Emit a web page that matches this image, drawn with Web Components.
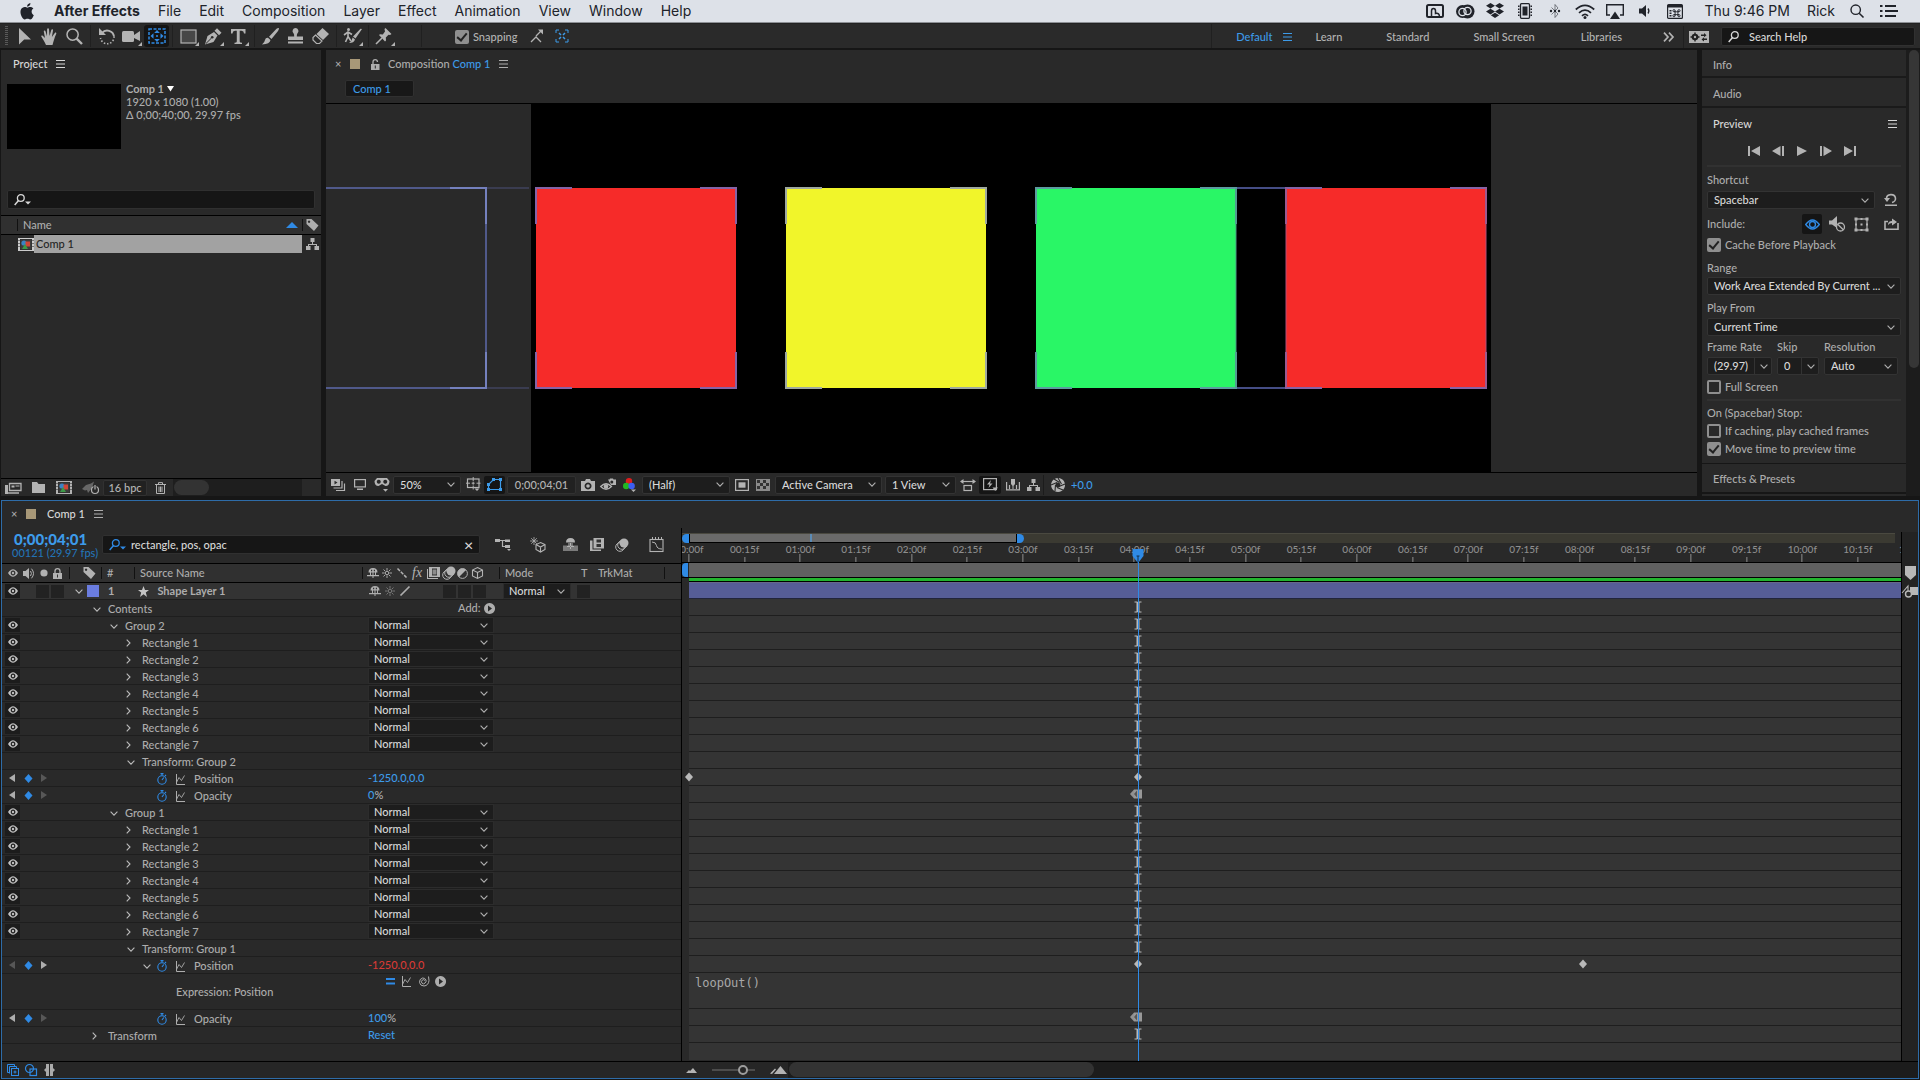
<!DOCTYPE html>
<html lang="en">
<head>
<meta charset="utf-8">
<title>After Effects</title>
<style>
:root{
  --bg:#292929; --dark:#161616; --field:#1d1d1d; --line:#1e1e1e; --text:#adadad; --bright:#d8d8d8; --blue:#3d9be9; --accent:#2f8ae5;
  --ui:Lato,"Open Sans",sans-serif;
}
html,body{height:100%}
body{margin:0;background:var(--dark);color:var(--text);font:500 11px/14px var(--ui);overflow:hidden}
</style>
</head>
<body>
<ae-app></ae-app>
<script>
const BASE = `*{box-sizing:border-box}
button,input,select,textarea{font:inherit;color:inherit;background:none;border:0;padding:0;margin:0;outline:0;border-radius:0}
button{display:flex;align-items:center;justify-content:center;cursor:default}
a{color:inherit;text-decoration:none}`;

function define(tag, css, html) {
  const tpl = document.createElement('template');
  if (typeof html === 'string') tpl.innerHTML = `<style>${BASE}${css}</style>${html}`;
  customElements.define(tag, class extends HTMLElement {
    constructor() { super(); this.attachShadow({mode: 'open'}); }
    connectedCallback() {
      if (this.ready) return;
      this.ready = true;
      if (typeof html === 'function') this.shadowRoot.innerHTML = `<style>${BASE}${css}</style>${html(this)}`;
      else this.shadowRoot.append(tpl.content.cloneNode(true));
    }
  });
}

/* name: [width, height, markup]; shapes use currentColor */
const S = 'fill="none" stroke="currentColor"';
const ICONS = {
  apple: [14,16,'<path d="M9.600 2.600C10.200 1.900 10.500 1 10.400 0 9.500.1 8.600.6 8 1.300 7.400 1.900 7 2.800 7.200 3.700 8.100 3.700 9 3.300 9.600 2.600zM10.400 4C9.100 3.900 8.100 4.700 7.400 4.700 6.800 4.700 5.800 4 4.700 4 3.200 4.100 1.900 4.900 1.200 6.100-.3 8.600.8 12.400 2.200 14.400 2.900 15.400 3.700 16.500 4.800 16.400 5.800 16.400 6.200 15.800 7.500 15.800 8.700 15.800 9.100 16.400 10.200 16.400 11.300 16.400 12 15.400 12.700 14.400 13.500 13.300 13.800 12.200 13.800 12.100 13.800 12.100 11.600 11.300 11.600 8.800 11.600 6.700 13.300 5.700 13.400 5.600 12.400 4.200 10.900 4 10.400 4z"/>'],
  magnet: [18,14,`<rect x="1" y="1" width="16" height="12" rx="1.500" ${S} stroke-width="2"/><path d="M5.500 13V7Q5.500 4.500 7.500 4.500T9.500 7V9.500Q13.500 8.500 13.500 13" ${S} stroke-width="1.500"/>`],
  cc: [20,15,`<circle cx="12.500" cy="7.500" r="7"/><circle cx="7.500" cy="7.500" r="6.500"/><g fill="none" stroke="#dfe3ea" stroke-width="1.300"><circle cx="7.500" cy="8" r="3.600"/><circle cx="12.500" cy="7" r="3.600"/></g>`],
  dropbox: [18,16,'<path d="M4.500 0 9 2.800 4.500 5.600 0 2.800zM13.500 0 18 2.800 13.500 5.600 9 2.800zM4.500 5.800 9 8.600 4.500 11.400 0 8.600zM13.500 5.800 18 8.600 13.500 11.400 9 8.600zM4.800 12.300 9 9.700l4.200 2.600L9 15z"/>'],
  chip: [14,16,`<rect x="2.500" y=".7" width="9" height="14.600" rx="1" ${S} stroke-width="1.300"/><path d="M4.500 3.500h5v9h-5zM0 2.500h1.500v1.500H0zM0 5.500h1.500v1.500H0zM0 8.500h1.500v1.500H0zM0 11.500h1.500V13H0zM12.500 2.500H14v1.500h-1.500zM12.500 5.500H14v1.500h-1.500zM12.500 8.500H14v1.500h-1.500zM12.500 11.500H14V13h-1.500z"/>`],
  bt: [12,16,`<path d="M2.500 4.500 9 11 6 14.500v-13L9 5 2.500 11.500" ${S} stroke-width=".9" opacity=".6"/><circle cx="2" cy="8" r="1.200"/><circle cx="6" cy="8" r="1.200"/><circle cx="10" cy="8" r="1.200"/>`],
  wifi: [20,15,`<g ${S} stroke-width="1.700"><path d="M.8 5.500Q10-2.800 19.200 5.500M4 8.800Q10 3.400 16 8.800M7 11.800Q10 9 13 11.800"/></g><circle cx="10" cy="13.400" r="1.500"/>`],
  airplay: [18,15,`<path d="M4 11H.7V.7h16.600V11H14" ${S} stroke-width="1.400"/><path d="M9 7.500 14 15H4z"/>`],
  vol: [12,14,`<path d="M0 4.500h3L7 1v12L3 9.500H0z"/><path d="M9 4.500Q10.800 7 9 9.500" ${S} stroke-width="1.300"/>`],
  cal: [16,15,`<rect x=".6" y=".6" width="14.800" height="13.800" rx="1" ${S} stroke-width="1.200"/><path d="M1 1h14v2.500H1z"/><path d="M2.500 6h2v1.500h-2zM2.500 8.500h2V10h-2zM2.500 11h2v1.500h-2z"/><g ${S} stroke-width=".9"><circle cx="7" cy="6.700" r="1.100"/><circle cx="12" cy="6.700" r="1.100"/><circle cx="7" cy="11.700" r="1.100"/><circle cx="12" cy="11.700" r="1.100"/><path d="M8.100 6.700v5M10.900 6.700v5M7 7.800h5M7 10.600h5"/></g>`],
  spot: [14,14,`<circle cx="5.700" cy="5.700" r="4.700" ${S} stroke-width="1.400"/><path d="M9.200 9.200 13.500 13.500" ${S} stroke-width="1.600"/>`],
  list: [18,12,'<path d="M0 0h2.500v2H0zM5 0h11v2H5zM0 5h2.500v2H0zM5 5h13v2H5zM0 10h2.500v2H0zM5 10h11v2H5z"/>'],
  grip: [4,20,'<path d="M0 0h3v1H0zM0 2h3v1H0zM0 4h3v1H0zM0 6h3v1H0zM0 8h3v1H0zM0 10h3v1H0zM0 12h3v1H0zM0 14h3v1H0zM0 16h3v1H0zM0 18h3v1H0z" opacity=".35"/>'],
  arrow: [12,17,'<path d="M0 0V16.500L5.200 11.600 12 11.500z"/>'],
  hand: [17,17,`<path d="M5 17C3.500 13.500 1.500 11 .3 8.600 0 7.500 1.200 7 2 7.900L4 10 2.800 3.500C2.700 2.300 4.200 2.100 4.500 3.200L6 8.200 6.100 1.200C6.200 0 7.900 0 8 1.200L8.500 8 10.300 2C10.600.9 12.200 1.200 12 2.400L10.900 9 13.800 5C14.500 4.100 15.800 4.900 15.200 5.900 13.600 9 12.500 13.500 11.500 17z"/>`],
  zoom: [17,17,`<circle cx="6.600" cy="6.600" r="5.600" ${S} stroke-width="1.500"/><path d="M10.600 10.600 16 16" ${S} stroke-width="2.400"/>`],
  rotate: [18,17,`<path d="M4 5A6.800 6.800 0 0 1 16 8.500" ${S} stroke-width="1.900"/><path d="M16 8.500A6.800 6.800 0 0 1 2.500 10" ${S} stroke-width="1.600" stroke-dasharray="1.500 1.700"/><path d="M1 0v7h7z"/>`],
  cam: [20,17,`<rect x="0" y="3" width="12" height="11" rx="1.500"/><path d="M12 7 18 3v10l-6-3z"/>`],
  panb: [18,18,`<rect x="1" y="2" width="16" height="14" ${S} stroke-width="1.500" stroke-dasharray="3 1.500"/><path d="M9 3l2.800 3H6.200zM9 15l2.800-3H6.200zM2.500 9l3-2.800v5.600zM15.500 9l-3-2.800v5.600z"/><circle cx="9" cy="9" r="1"/>`],
  rect: [18,17,`<rect x="1" y="2" width="15" height="13" fill="#474747" stroke="currentColor" stroke-width="1.200"/>`],
  pen: [17,17,`<path d="M0 16.500 2.500 8 9 4 12.500 7.500 8.500 14z"/><path d="M9.500 2.800 12 .3l4.500 4.500-2.500 2.500z"/><path d="M.8 15.700 6.500 10" stroke="#2a2a2a"/><circle cx="7.200" cy="9.300" r="1.300" fill="#2a2a2a"/>`],
  type: [15,15,'<path d="M0 0H14.500V4.500H13Q13 2 10.500 1.800H8.700V12.500Q8.700 13.700 11 13.800V15H3.500V13.800Q5.800 13.700 5.800 12.500V1.800H4Q1.500 2 1.500 4.500H0z"/>'],
  brush: [17,17,'<path d="M16.800 0Q17.500.6 16 3L9.500 11 7 8.800 14.500.8Q16-.4 16.800 0zM6 9.800 8.500 12Q8 16 0 16.500 2.800 14 3 12 3.500 9.500 6 9.800z"/>'],
  stamp: [17,17,'<path d="M8.500 0A3 3 0 0 1 10.500 5.200Q9.700 6 9.800 8.500H16V12H1V8.500H7.200Q7.300 6 6.500 5.200A3 3 0 0 1 8.500 0zM1 13.500H16V15.500H1z"/>'],
  eraser: [18,17,`<path d="M10.500 0 17 6 11 12 4.500 6z"/><path d="M3.500 7 10 13 7.500 15.500H4.500L1 12V9.500z" ${S} stroke-width="1.200"/>`],
  roto: [20,17,`<circle cx="5.500" cy="1.500" r="1.500"/><path d="M5 3.500v5L2.500 14M5 8.500 8 13M1 7 5 4l4 2.500" ${S} stroke-width="1.600"/><path d="M19 1 12.500 10.500 10 8.500 17.500.8zM9.700 9.500 12 11.500Q11 15 6 15 9 13 9.700 9.500z"/>`],
  pin: [17,17,`<path d="M9.500 0 15.500 6 14 7 12.500 6.800 9.800 9.500 10 12.500 9 13.500 3 7 4 6.200 6.800 6.400 9 3.500 8.500 1z"/><path d="M6 10 0 16" ${S} stroke-width="1.600"/>`],
  snap1: [14,14,`<path d="M1 13 6 8l5 5M6 7l5-5" ${S} stroke-width="1.300"/><path d="M8 .5h5v5z"/>`],
  snap2: [14,14,`<path d="M4 1H1v3M10 1h3v3M4 13H1v-3M10 13h3v-3" ${S}/><path d="M4 4l2 2M10 4 8 6M4 10l2-2M10 10 8 8" ${S} stroke-width="1.500"/>`],
  menu: [9,8,'<path d="M0 0h9v1H0zM0 3.500h9v1H0zM0 7h9v1H0z"/>'],
  more: [12,10,`<path d="M1 .7 5 5 1 9.300M6 .7 10 5 6 9.300" ${S} stroke-width="1.700"/>`],
  sync: [20,12,'<rect width="20" height="12"/><g fill="#222"><circle cx="6" cy="6" r="3.300"/><path d="M5.300 1.500h1.400v9H5.300zM1.500 5.300h9v1.400h-9z"/><path d="M12 3.500h3V2l2.500 2.200L15 6.300V5h-3zM18 7.500h-3V6.300L12.500 8.500 15 10.600V9h3z"/></g><circle cx="6" cy="6" r="1.200"/>'],
  mag: [11,12,`<circle cx="6.800" cy="4" r="3.400" ${S} stroke-width="1.300"/><path d="M4.500 6.500.7 11" ${S} stroke-width="1.500"/>`],
  magd: [17,12,`<circle cx="6.800" cy="4" r="3.400" ${S} stroke-width="1.300"/><path d="M4.500 6.500.7 11" ${S} stroke-width="1.500"/><path d="M11 7.500h6L14 10.500z"/>`],
  sort: [12,6,'<path d="M6 0 12 6H0z" fill="#2f8ae5"/>'],
  down: [7,6,'<path d="M0 0h7L3.500 5.500z"/>'],
  tag: [13,12,'<path fill-rule="evenodd" d="M.5 0H5.500L12.500 6.500 8 12 .5 5zM3 1.500a1.200 1.200 0 1 0 .1 0z"/>'],
  compi: [16,13,`<path d="M0 0h2v13H0zM14 0h2v13h-2zM2 0h12v1H2zM2 12h12v1H2z"/><path d="M.5 2h1v1h-1zM.5 5h1v1h-1zM.5 8h1v1h-1zM14.500 2h1v1h-1zM14.500 5h1v1h-1zM14.500 8h1v1h-1z" fill="#222"/><path d="M2.500 1.500h11v10h-11z" fill="#3c3c3c"/><circle cx="6" cy="5" r="2.600" fill="#3a84c4"/><path d="M7.500 3.500H12v5H7.500z" fill="#d04536"/><path d="M7 6l3 5H4z" fill="#3d9a48"/>`],
  flow: [13,12,'<path d="M4.500 0h4v4h-4zM0 8h4.500v4H0zM8.500 8H13v4H8.500z"/><path d="M6 4h1v2h4v2.500h-1V7H3v1.500H2V6h4z"/>'],
  interp: [17,12,`<path d="M4.500 1.500h11.500v7H4.500z" ${S} stroke-width="1.300"/><path d="M6.500 3.500h3v2h-3zM10.500 3.500h4v1h-4zM0 3h3v9H0z"/><path d="M3 11h11" ${S} stroke-width="1.500"/>`],
  folder: [13,11,'<path d="M0 0H5L6.500 2H13V11H0z"/>'],
  rocket: [17,12,`<path d="M0 7 4 3 9 1.500 12-.5 10 6 6 11 5 8 3 8.500z" opacity=".45"/><circle cx="13" cy="8" r="3.500" ${S} stroke-width="1.200"/><path d="M13 3v4.500" stroke="#292929" stroke-width="3"/><path d="M13 3v4.500" ${S} stroke-width="1.200"/>`],
  trash: [11,12,`<path d="M0 2.500h11M3.500 2V.6h4V2M1.500 3v8.500h8V3M4 4.500v5.500M5.500 4.500v5.500M7 4.500v5.500" ${S}/>`],
  unlock: [9,11,`<path d="M2 5V3Q2 .7 4.200.7T6.500 3" ${S} stroke-width="1.300"/><rect y="5" width="8.500" height="6"/><path d="M3.800 6.500h1v3h-1z" fill="#292929"/>`],
  lock: [9,11,`<path d="M2 5V3Q2 .7 4.500.7T7 3v2" ${S} stroke-width="1.300"/><rect y="5" width="9" height="6"/><path d="M4 6.500h1v3H4z" fill="#333"/>`],
  stack: [14,12,`<rect width="9" height="7"/><path d="M11 2v7H2.500M13.500 4.500v7H5" ${S} stroke-width="1.200"/><path d="M3.500 1.800v3.600L6.500 3.600z" fill="#292929"/>`],
  monitor: [12,11,`<rect x=".6" y=".6" width="10.800" height="7.300" ${S} stroke-width="1.200"/><path d="M3 9.500h6V11H3z"/>`],
  goggle: [16,14,`<path fill-rule="evenodd" d="M3 0H13L15.500 3Q15.500 8 11.500 8L8 6 4.500 8Q.5 8 .5 3zM4.700 1.800a2 2 0 1 0 .1 0zM11.200 1.800a2 2 0 1 0 .1 0z"/><path d="M9 11h5l-2.500 2.700z"/>`],
  guides: [15,15,`<rect x="1.500" y="2" width="11.500" height="8.500" ${S} stroke-width="1.200"/><path d="M7.200 0v4M7.200 8.500v4M0 6.200h4M10.500 6.200h4M5.700 6.200h3M7.200 4.700v3" ${S}/><path d="M8.500 11.500h5L11 14z"/>`],
  mask: [15,13,`<path d="M1.500 11.500V6.500L6.500 1.500H13.500V11.500z" ${S} stroke-width="1.200"/><path d="M0 10h3v3H0zM12 10h3v3h-3zM12 0h3v3h-3zM5 0h3v3H5zM0 5h3v3H0z"/>`],
  photo: [14,12,'<path fill-rule="evenodd" d="M0 2H4L5 0H9L10 2H14V12H0zM7 3.500a3.500 3.500 0 1 0 .1 0z"/><circle cx="7" cy="7" r="1.800"/>'],
  showsnap: [16,14,`<path d="M.7 8.500Q6 3 11.500 8.500 6 14 .7 8.500z" ${S} stroke-width="1.300"/><circle cx="6" cy="8.500" r="2.300"/><path d="M8 1.500h1.500L10 .5h3l.5 1H16v5.500h-5z"/><circle cx="11.800" cy="4" r="1.500" fill="#292929"/>`],
  rgb: [14,14,'<circle cx="6" cy="3.200" r="3.200" fill="#e01d1d"/><circle cx="3.200" cy="8" r="3.200" fill="#22b722"/><circle cx="8.600" cy="8" r="3.200" fill="#3c5df0"/><path d="M8 11.500h5L10.500 14z"/>'],
  roi: [14,12,`<rect x=".6" y=".6" width="12.800" height="10.800" ${S} stroke-width="1.200"/><rect x="3.500" y="3.300" width="7" height="5.400"/>`],
  checker: [14,12,`<rect width="14" height="12" fill="#8b8b8b"/><path d="M1 1h3v3H1zM7 1h3v3H7zM4 4h3v3H4zM10 4h3v3h-3zM1 7h3v3H1zM7 7h3v3H7z" fill="#333"/>`],
  aspect: [16,12,`<path d="M1 2.500h14" ${S} stroke-width="1.200"/><path d="M0 2.500 3.500 0v5zM16 2.500 12.500 0v5z"/><rect x="4" y="6.500" width="7.500" height="5" ${S} stroke-width="1.200"/>`],
  fast: [15,13,`<rect x=".6" y=".6" width="12.800" height="11" ${S} stroke-width="1.200"/><path d="M8 2 4 6.500h2.500L5.500 10l4-4.500H7zM9.500 9.500H15L12.200 13z"/>`],
  tlbtn: [14,12,`<path d="M.6 3v7.800h12.800V3M3.500 10V6M10.500 10V6" ${S} stroke-width="1.200"/><path d="M5 0h4v5L7 7.500 5 5zM6.500 6h1v4h-1z"/>`],
  shutter: [14,14,`<path fill-rule="evenodd" d="M7 0a7 7 0 1 0 .1 0zM7 4.500a2.500 2.500 0 1 1-.1 0z"/><path d="M7 0 10.500 6M14 6 8 8.500M12 12 6 9.500M4 13 4.500 7M0 7 6 4.500M3 1 8.500 4.500" stroke="#292929" stroke-width="1.100"/>`],
  first: [12,10,'<path d="M0 0h2v10H0zM12 0v10L3 5z"/>'],
  prev: [12,10,'<path d="M8.500 0v10L0 5zM10 0h2v10h-2z"/>'],
  play: [10,10,'<path d="M0 0v10L10 5z"/>'],
  next: [12,10,'<path d="M0 0h2v10H0zM3.500 0v10L12 5z"/>'],
  last: [12,10,'<path d="M0 0v10L9 5zM10 0h2v10h-2z"/>'],
  reset: [14,12,`<path d="M2.500 4.500A4.500 4 0 1 1 8 8.500" ${S} stroke-width="1.600"/><path d="M0 4h6L3 8zM1 10.500h12V12H1z"/>`],
  eyeb: [15,11,`<path d="M.7 5.500Q7.500-3.500 14.300 5.500 7.500 14.500.7 5.500z" ${S} stroke-width="1.300"/><circle cx="7.500" cy="5.500" r="3" ${S} stroke-width="1.400"/>`],
  mute: [17,16,`<path d="M0 4.500h3L8 0v12L3 8.500H0z"/><circle cx="11.500" cy="11" r="4" fill="#292929" stroke="currentColor" stroke-width="1.300"/><path d="M8.700 8.200 14.300 13.800" ${S} stroke-width="1.300"/>`],
  frame: [15,15,`<rect x="2" y="2" width="11" height="11" ${S} stroke-width="1.200"/><path d="M.5.500h3v3h-3zM11.500.500h3v3h-3zM.5 11.500h3v3h-3zM11.500 11.500h3v3h-3zM6.500 1h2v2h-2zM6.500 12h2v2h-2zM1 6.500h2v2H1zM12 6.500h2v2h-2zM6.500 6.500h2v2h-2z"/>`],
  share: [15,12,`<path d="M4 3.500H1V11.300H14V5" ${S} stroke-width="1.600"/><path d="M4 7Q4 3 8 3V.5L13 4 8 7.500V5Q5.500 5 4 7z"/>`],
  chev: [8,5,`<path d="M.6.700 4 4.200 7.400.700" ${S} stroke-width="1.100"/>`],
  chevr: [5,8,`<path d="M.7.600 4 4 .7 7.400" ${S} stroke-width="1.100"/>`],
  flowmini: [17,13,`<path d="M0 1h5v3H0zM10 1.500h5v2.500h-5zM10 7h5v3h-5z"/><path d="M5 2.500h5M7.500 2.500V8.500H10" ${S} stroke-width="1.200"/><path d="M12 11h4l-2 2z"/>`],
  cubestar: [16,16,`<path d="M10.500 5.500 15 7.500V12.500L10.500 15 6 12.500V7.500zM6 7.500 10.500 10 15 7.500M10.500 10v5" ${S} stroke-width="1.100"/><path d="M4 0v8M0 4h8M1.200 1.200l5.600 5.600M6.800 1.200 1.200 6.800" ${S} stroke-width=".8"/>`],
  shybtn: [16,13,'<path d="M0 7.500h15V13H0z" opacity=".6"/><path fill-rule="evenodd" d="M3 4.500Q3 0 7.500 0T12 4.500zM5.500 5h1v3h-1zM8.500 5h1v3h-1zM7 4h1v7H7zM4 8h7v1H4z"/>'],
  film: [14,13,`<path d="M3.500 0H14V10.500H3.500zM0 2.500h2.500v9H11V13H0z"/><path d="M6.500 1.500h4.500v3H6.500zM6.500 6h4.500v3H6.500z" fill="#333"/>`],
  film2: [13,12,`<path fill-rule="evenodd" d="M2 0H13V10H2zM5 1.500v7h5v-7zM0 2h1v9h10v1H0z"/><path d="M5.500 2.500h4v5h-4z" opacity=".7"/>`],
  blur: [14,14,`<circle cx="5" cy="9" r="4.300" ${S}/><circle cx="7" cy="7" r="4.300" ${S}/><circle cx="9" cy="5" r="4.500"/>`],
  graphed: [16,16,`<rect x="1" y="2.500" width="13" height="12" ${S} stroke-width="1.100"/><path d="M3 5Q7 5 7.500 8.500T13 12M3.500 0v2.500M6.500 0v2.500M9.500 0v2.500M12.500 0v2.500" ${S}/>`],
  eye: [10,8,'<path fill-rule="evenodd" d="M0 4Q5-3.500 10 4 5 11.500 0 4zM5 1.600a2.400 2.400 0 1 0 .1 0z"/><circle cx="5" cy="4" r="1.200"/>'],
  spk: [12,11,`<path d="M0 3h2.500L6 0v11L2.500 8H0z"/><path d="M7.500 3Q9.300 5.500 7.500 8M8.500.700Q12.500 5.500 8.500 10.300" ${S}/>`],
  dot: [8,8,'<circle cx="4" cy="4" r="3.600"/>'],
  shy: [12,10,'<path fill-rule="evenodd" d="M1.500 4.500Q1.500 0 6 0t4.500 4.500zM4 1.800h1.200v1.500H4zM6.800 1.800H8v1.500H6.800z"/><path d="M5.500 4h1v6h-1zM0 7h12v1.200H0zM3 4h1v3.500H3zM8 4h1v3.500H8z"/>'],
  sun: [10,10,`<circle cx="5" cy="5" r="1.800" ${S}/><path d="M5 0v2.500M5 7.500V10M0 5h2.500M7.500 5H10M1.500 1.500 3 3M7 7l1.500 1.500M8.500 1.500 7 3M3 7 1.500 8.500" ${S} stroke-width=".9"/>`],
  dash: [10,10,`<path d="M.5.500 9.500 9.500" ${S} stroke-width="1.500" stroke-dasharray="3.500 1.200"/>`],
  slash: [10,10,`<path d="M.5 9.500 9.500.500" ${S} stroke-width="1.700"/>`],
  adj: [11,11,`<circle cx="5.500" cy="5.500" r="4.900" ${S}/><path d="M9 2 2 9A4.900 4.900 0 0 1 2 2 4.900 4.900 0 0 1 9 2z"/>`],
  cube: [11,12,`<path d="M5.500.6 10.500 3V9L5.500 11.500.5 9V3zM.5 3 5.500 5.500 10.500 3M5.500 5.500v6" ${S} stroke-width="1.100"/>`],
  star: [11,11,'<path d="M5.500 0 7 4H11L7.800 6.600 9 11 5.500 8.300 2 11 3.200 6.600 0 4H4z"/>'],
  playc: [11,11,'<path fill-rule="evenodd" d="M5.500 0a5.500 5.500 0 1 0 .1 0zM4 2.500V8.500L8 5.500z"/>'],
  kprev: [6,8,'<path d="M6 0v8L0 4z"/>'], knext: [6,8,'<path d="M0 0v8L6 4z"/>'],
  kdia: [9,9,'<path d="M4.500 0 8.500 4.500 4.500 9 .5 4.500z"/>'],
  watch: [10,12,`<circle cx="5" cy="7" r="4.200" ${S} stroke-width="1.100"/><path d="M3.500.600h3M5 .600v2M8 2l1 1M5 7l1.800-2.500" ${S} stroke-width="1.200"/>`],
  graph: [9,11,`<path d="M.5 0V10.500H9" ${S}/><path d="M.7 8 3 3.500 5.500 6.500 8.500 1.500" ${S} stroke-width=".9"/>`],
  eq: [9,7,'<path d="M0 0h9v2H0zM0 4.500h9v2H0z"/>'],
  swirl: [12,11,`<path d="M7 4.500A2 2 0 1 0 7 7Q8.500 6 8 4 7 1.800 4.500 2 1.200 3 1.500 6.500 2.200 10 6 10 10.500 9.500 11 4.500L10.500.500" ${S}/>`],
  f1: [12,12,`<rect x="4.500" y="4.500" width="7" height="7" ${S}/><path d="M2.500 8.500H.5V.5H7.500V2.500M2.500 9.500V2.500H9.500V4M6.500 8h3M8 6.500v3" ${S}/>`],
  f2: [12,12,`<circle cx="4.500" cy="4.500" r="4" ${S} stroke-width="1.200"/><rect x="5" y="5" width="6.500" height="6.500" ${S} stroke-width="1.200"/>`],
  f3: [11,12,'<path d="M2 0h3v12H2V8L0 6 2 4zM9 0H6v12h3V8l2-2-2-2z"/>'],
  mt1: [11,5,'<path d="M0 5 3 2 4 3 7 0l4 5z"/>'], mt2: [17,8,`<path d="M4 8 10.500 0 17 8zM0 7.500 5 2.500 6 3.500 2 8z"/>`],
  shield: [11,14,'<path d="M0 0h11v9L5.500 14 0 9z"/>'],
  comps: [16,13,`<path d="M8 2h8v8H8z"/><path d="M0 8 6 1V9" ${S} stroke-width="1.100"/><circle cx="6.500" cy="9" r="3" fill="#292929" stroke="currentColor" stroke-width="1.400"/>`],
  head: [12,14,'<path d="M.5 0h11v7L6 14 .5 7z" fill="#2f8ae5"/><path d="M6 7v6M4.500 7h3" stroke="#10304f"/>'],
  ibeam: [7,11,`<path d="M0 0h3v1H0zM4 0h3v1H4zM2 .5h3v10H2zM0 10h3v1H0zM4 10h3v1H4z"/>`],
  opk: [12,9,'<path d="M4 0v9L0 4.500z" opacity=".7"/><path d="M4 0H12V9H4z" opacity=".75"/><path d="M7 1v7L4 4.500z" fill="#555"/>'],
};
define('ae-icon', ':host{display:block;flex:none}svg{display:block;fill:currentColor;overflow:visible}', el => {
  const [w, h, m] = ICONS[el.getAttribute('name')];
  return `<svg width="${w}" height="${h}" viewBox="0 0 ${w} ${h}" aria-hidden="true">${m}</svg>`;
});
const ic = (n, c) => `<ae-icon name="${n}"${c ? ` class="${c}"` : ''}></ae-icon>`;

define('ae-select', `
:host{display:grid;height:18px;color:var(--bright)}
select{grid-area:1/1;appearance:none;width:100%;min-width:0;background:var(--field);border:1px solid #333;border-radius:2px;padding:0 14px 0 6px;line-height:14px;text-overflow:ellipsis}
ae-icon{grid-area:1/1;justify-self:end;align-self:center;margin-right:6px;pointer-events:none;color:#b0b0b0}
:host([split]) ae-icon{border-left:1px solid #333;padding:6px 0 5px 5px;margin-right:4px}
:host([split]) select{padding-right:0}
:host([slim]){height:16px}
:host([slim]) select{border-radius:0;border-color:#2c2c2c;padding-left:5px}
`, el => `<select aria-label="${el.getAttribute('label')}"><option>${el.textContent}</option></select>${ic('chev')}`);

define('ae-check', `
:host{display:flex}
label{display:flex;align-items:center;gap:4px}
input{appearance:none;width:14px;height:14px;border:2px solid #8f8f8f;border-radius:2px;display:grid;place-items:center}
input:checked{background:#8f8f8f}
input:checked::before{content:"";width:4px;height:8px;border:solid #222;border-width:0 2px 2px 0;transform:rotate(40deg);margin-top:-2px}
`, el => `<label><input type="checkbox"${el.hasAttribute('checked') ? ' checked' : ''}><slot></slot></label>`);

define('ae-search', `
:host{display:flex;flex:none;align-items:center;background:#161616;border:1px solid #303030;border-radius:2px;height:19px;padding-left:6px;gap:5px;color:var(--bright)}
:host([hint]){gap:10px}
input{flex:1;min-width:0;width:0;height:100%}input::placeholder{color:var(--bright);opacity:1}
:host([blue]) .m{color:var(--accent)}
button{width:16px;height:100%;font-size:16px;line-height:14px;margin-right:-1px;justify-content:start}
`, el => `${ic(el.getAttribute('icon'), 'm')}<input type="text" aria-label="${el.getAttribute('label')}" placeholder="${el.getAttribute('hint') || ''}" value="${el.getAttribute('value') || ''}">${el.hasAttribute('value') ? '<button aria-label="Clear">×</button>' : ''}`);

define('mac-menubar', `
:host{display:flex;align-items:center;height:23px;background:#dde1e8;border-bottom:1px solid #8d9095;color:#20232a;font:400 14px/18px Inter,Roboto,sans-serif;padding:0 22px 0 20px}
nav{display:flex;gap:18px;align-items:center}
nav b{font-weight:700;margin-left:2px}
.r{margin-left:auto;display:flex;align-items:center}
.c{display:flex;justify-content:center;width:30px}
.t{margin:0 17px 0 14px}.u{margin-right:15px}
`, `<nav>${ic('apple')}<b>After Effects</b>${['File','Edit','Composition','Layer','Effect','Animation','View','Window','Help'].map(t => `<a href="#">${t}</a>`).join('')}</nav>
<div class="r">${['magnet','cc','dropbox','chip','bt','wifi','airplay','vol','cal'].map(n => `<span class="c">${ic(n)}</span>`).join('')}
<span class="t">Thu 9:46 PM</span><span class="u">Rick</span>${ic('spot')}<span class="c" style="width:34px;justify-content:end">${ic('list')}</span></div>`);

define('ae-toolbar', `
:host{display:flex;align-items:center;height:25px;background:#2a2a2a;border-top:1px solid #222;color:#b3b3b3}
.g{width:12px;padding-left:5px;overflow:hidden}
button{width:25px;height:22px;border-radius:3px;position:relative}
.on{color:var(--accent);background:#151515}
.f::after{content:"";position:absolute;right:2px;bottom:1px;border:2px solid;border-color:transparent currentColor currentColor transparent}
i{width:7px;height:22px;border-left:1px solid #202020;margin-left:3px;margin-right:-3px}
.e{width:34px;margin:0 0 0 24px}
ae-check{margin-right:7px;padding-top:2px}.s{width:25px;height:auto}
.blue{color:var(--blue)}
nav{margin-left:auto;display:flex;align-items:center;height:24px;border-left:1px solid #202020;padding:1px 0 0 24px}
nav a{margin-right:44px}nav .d{margin-right:10px}nav .m{margin-right:24px}
nav .w{margin-right:46px}nav .l{margin-right:37px}
nav .x{width:19px;margin-right:5px}
nav .y{border-left:1px solid #202020;padding:0 12px 0 5px;width:auto;border-radius:0}
ae-search{width:194px;margin-right:5px}
`, `<span class="g">${ic('grip')}</span>
<button aria-label="Selection">${ic('arrow')}</button><button aria-label="Hand">${ic('hand')}</button><button aria-label="Zoom">${ic('zoom')}</button><i></i>
<button aria-label="Rotation">${ic('rotate')}</button><button class="f" aria-label="Camera">${ic('cam')}</button><button class="on" aria-label="Pan behind">${ic('panb')}</button><i></i>
<button class="f" aria-label="Rectangle">${ic('rect')}</button><button class="f" aria-label="Pen">${ic('pen')}</button><button class="f" aria-label="Type">${ic('type')}</button><i></i>
<button aria-label="Brush">${ic('brush')}</button><button aria-label="Clone stamp">${ic('stamp')}</button><button aria-label="Eraser">${ic('eraser')}</button><i></i>
<button class="f" aria-label="Roto brush">${ic('roto')}</button><i></i><button class="f" aria-label="Puppet pin">${ic('pin')}</button><i class="e"></i>
<ae-check checked>Snapping</ae-check><button class="s" aria-label="Snap edges">${ic('snap1')}</button><button class="s blue" aria-label="Snap features">${ic('snap2')}</button>
<nav><a class="blue d" href="#">Default</a><span class="blue m">${ic('menu')}</span><a href="#">Learn</a><a href="#">Standard</a><a class="w" href="#">Small Screen</a><a class="l" href="#">Libraries</a><button class="x" aria-label="More">${ic('more')}</button><button class="y" aria-label="Sync">${ic('sync')}</button><ae-search icon="mag" label="Search Help" hint="Search Help"></ae-search></nav>`);

define('project-panel', `
:host{display:flex;flex-direction:column;background:var(--bg)}
h2{font:inherit;margin:0;display:flex;align-items:center;gap:9px;height:28px;padding-left:12px;color:var(--bright)}
.info{display:flex;gap:5px;padding:6px 0 0 6px;height:112px;line-height:13px}
.th{width:114px;height:65px;background:#000}
.tx{margin-top:-2px}p{margin:0}
.n{font-weight:700;display:flex;align-items:center;gap:3px}.n ae-icon{color:#fff}
ae-search{margin:0 6px 6px 6px}
table{border-collapse:collapse;width:100%;table-layout:fixed;border-top:1px solid #000}
th,td{padding:0;font-weight:inherit;text-align:left;height:18px}
th+th,td+td{padding-left:3px}
thead{background:#303030;border-bottom:1px solid #000}
.k{display:flex;align-items:center;height:18px}
.bar{border-left:1px solid #111;height:12px;margin-right:5px}
.sel{background:#a2a2a2;color:#262626;padding-left:2px;flex:1;height:18px;line-height:18px}
td .k{color:#ccc}
.fill{flex:1}
footer{display:grid;grid-template-columns:25px 25px 26px 26px 44px 26px 129px 1fr;height:18px;border-top:1px solid #000;align-items:center;justify-items:center;color:#b3b3b3}
.b{width:44px;height:16px;background:#212121;border:1px solid #313131;border-radius:2px}
.tr{background:#1e1e1e;width:100%;height:17px;display:flex}.tr span{width:35px;height:15px;margin:1px;border-radius:8px;background:#333}
`, `<h2>Project ${ic('menu')}</h2>
<div class="info"><div class="th"></div><div class="tx"><p class="n">Comp 1${ic('down')}</p><p>1920 x 1080 (1.00)</p><p>Δ 0;00;40;00, 29.97 fps</p></div></div>
<ae-search icon="magd" label="Search project"></ae-search>
<table><colgroup><col><col style="width:18px"></colgroup><thead><tr><th><span class="k" style="padding-left:16px"><span class="bar"></span>Name<span style="margin:0 4px 0 auto">${ic('sort')}</span><span class="bar" style="margin:0"></span></span></th><th>${ic('tag')}</th></tr></thead>
<tbody><tr><td><span class="k" style="padding-left:17px">${ic('compi')}<span class="sel" style="margin-right:1px">Comp 1</span></span></td><td style="color:#b3b3b3">${ic('flow')}</td></tr></tbody></table>
<div class="fill"></div>
<footer>${['interp','folder','compi','rocket'].map(n => `<button aria-label="${n}">${ic(n)}</button>`).join('')}<button class="b">16 bpc</button><button aria-label="Delete">${ic('trash')}</button><span class="tr"><span></span></span></footer>`);

define('ae-viewer', ':host{display:block;background:var(--bg);min-height:0;overflow:hidden}svg{display:block;width:100%;height:100%}', () => {
  const sq = (x, c) => `<rect x="${x}" y="84" width="200" height="200" fill="${c}"/>`;
  const corners = (x, c) => `<path d="M${x} 120V84h36M${x+164} 84h36v36M${x+200} 248v36h-36M${x+36} 284H${x}v-36" fill="none" stroke="${c}" stroke-width="2"/>`;
  return `<svg viewBox="0 0 1371 368" preserveAspectRatio="xMidYMid slice" role="img" aria-label="Composition view"><rect x="205" width="960" height="368"/>
${sq(210,'#f62b29')}${sq(460,'#f1f52a')}${sq(710,'#29f666')}${sq(960,'#f62b29')}
<g stroke="#3a3c50" stroke-width="2"><path d="M160 84h43M160 284h43"/></g>
<g stroke="#50598a" stroke-width="2" fill="none"><path d="M0 84H160V284H0"/></g>
<g stroke="#454d85"><path d="M876 84h84M876 284h84" stroke-width="2"/></g>
<path d="M124 84h36v36M160 248v36h-36" fill="none" stroke="#7480bd" stroke-width="2"/>
${corners(210,'#8563a6')}${corners(460,'#9fa9a0')}${corners(710,'#5c9ca0')}${corners(960,'#8563a6')}
<path d="M910 84V284" stroke="#4b9b86"/><path d="M960 84V284M1160 84V284" stroke="#b0517a"/></svg>`;
});

define('comp-panel', `
:host{display:flex;flex-direction:column;background:var(--bg)}
.tab{display:flex;align-items:center;height:28px;padding-left:9px}
.x{width:15px;height:14px;justify-content:start}.sw{width:10px;height:10px;background:#a89878;margin-right:11px}
.t{margin:0 9px 0 8px}.t a,.c{color:var(--blue)}
.c{margin:2px 0 6px 19px;width:69px;height:17px;background:#181818;border:1px solid #303030;border-radius:2px;justify-content:start;padding-left:7px}
ae-viewer{flex:1;border-top:1px solid #000;border-bottom:1px solid #000}
footer{display:grid;grid-template-columns:23px 22px 21px 71px 20px 23px 72px 19px 22px 22px 91px 20px 22px 110px 74px 20px 24px 21px 20px 5px 20px 60px;height:23px;align-items:center;color:#b3b3b3}
footer ae-select{margin:0 2px 0 1px}
.on{background:#151515;height:18px;border-radius:2px;margin:0 1px}
.b{color:var(--blue)}.tc{height:18px;background:#212121;border:1px solid #313131;border-radius:2px;margin:0 2px 0 1px}
.s{border-left:1px solid #1c1c1c;height:20px}
`, `<div class="tab"><button class="x" aria-label="Close">×</button><span class="sw"></span>${ic('unlock')}<span class="t">Composition <a href="#">Comp 1</a></span>${ic('menu')}</div>
<button class="c">Comp 1</button><ae-viewer></ae-viewer>
<footer>${['stack','monitor','goggle'].map(n => `<button aria-label="${n}">${ic(n)}</button>`).join('')}<ae-select label="Magnification">50%</ae-select><button aria-label="Guides">${ic('guides')}</button><button class="on b" aria-label="Mask visibility">${ic('mask')}</button><button class="tc">0;00;04;01</button>${['photo','showsnap','rgb'].map(n => `<button aria-label="${n}">${ic(n)}</button>`).join('')}<ae-select label="Resolution">(Half)</ae-select><button aria-label="Region">${ic('roi')}</button><button aria-label="Transparency">${ic('checker')}</button><ae-select label="3D view">Active Camera</ae-select><ae-select label="View layout">1 View</ae-select><button aria-label="Pixel aspect">${ic('aspect')}</button><button class="on" aria-label="Fast previews">${ic('fast')}</button><button aria-label="Timeline">${ic('tlbtn')}</button><button aria-label="Flowchart">${ic('flow')}</button><span class="s"></span><button aria-label="Reset exposure">${ic('shutter')}</button><button class="b" style="justify-content:start;padding-left:3px">+0.0</button></footer>`);

define('preview-panel', `
:host{display:flex;background:#1c1c1c;gap:2px}
.m{flex:1;background:var(--bg);display:flex;flex-direction:column}
h2{font:inherit;margin:0;height:30px;padding:3px 9px 0 11px;display:flex;align-items:center;justify-content:space-between;border-bottom:2px solid #1a1a1a;flex:none}
h2.t{height:28px}h2.p{border:0;color:var(--bright);height:32px;padding-top:0}
.body{padding:0 5px;display:flex;flex-direction:column}
.tr{display:flex;justify-content:center;height:27px;border-bottom:2px solid #313131;padding:0 4px 4px 0;color:#b3b3b3}
.tr button{width:24px}
.l{height:23px;display:flex;align-items:center;padding-top:3px}
.l.r1{height:25px;padding-top:6px}
.r{display:flex;align-items:center;color:#b3b3b3}
.r .g{flex:1}
.ib{width:20px;height:20px}.on{background:#151515;color:var(--accent);border-radius:2px}
.three{display:grid;grid-template-columns:65px 42px 74px;column-gap:5px}
hr{border:0;border-top:2px solid #313131;margin:0;width:100%}
.e{border-top:1px solid #161616;border-bottom:2px solid #161616;height:31px;padding:2px 11px 0;margin-top:7px;display:flex;align-items:center}
.sb{width:12px;padding:0 1px}.sb div{height:318px;background:#363636;border-radius:5px}
`, `<div class="m"><h2 class="t">Info</h2><h2>Audio</h2><h2 class="p">Preview ${ic('menu')}</h2>
<div class="body"><div class="tr">${['first','prev','play','next','last'].map(n => `<button aria-label="${n}">${ic(n)}</button>`).join('')}</div>
<div class="l">Shortcut</div>
<div class="r"><ae-select class="g" label="Shortcut">Spacebar</ae-select><button class="ib" style="margin-left:6px" aria-label="Reset">${ic('reset')}</button></div>
<div class="r" style="height:28px"><span class="g" style="color:var(--text)">Include:</span><button class="ib on" aria-label="Video">${ic('eyeb')}</button><button class="ib" style="margin:0 4px 0 5px" aria-label="Audio">${ic('mute')}</button><button class="ib" aria-label="Overlays">${ic('frame')}</button><button class="ib" style="margin-left:10px" aria-label="Loop">${ic('share')}</button></div>
<ae-check checked>Cache Before Playback</ae-check>
<div class="l r1">Range</div><ae-select label="Range">Work Area Extended By Current ...</ae-select>
<div class="l">Play From</div><ae-select label="Play From">Current Time</ae-select>
<div class="three l" style="padding:0;height:21px"><span>Frame Rate</span><span>Skip</span><span>Resolution</span></div>
<div class="three"><ae-select split label="Frame Rate">(29.97)</ae-select><ae-select split label="Skip">0</ae-select><ae-select label="Resolution">Auto</ae-select></div>
<ae-check style="margin:5px 0">Full Screen</ae-check><hr>
<div class="l" style="padding:0">On (Spacebar) Stop:</div>
<ae-check style="margin-bottom:4px">If caching, play cached frames</ae-check><ae-check checked>Move time to preview time</ae-check></div>
<div class="e">Effects &amp; Presets</div></div>
<div class="sb"><div></div></div>`);

/* ---------- timeline data: cx = chevron offset in the tree, tx = gap from chevron to name ---------- */
const rects = [1,2,3,4,5,6,7].map(n => ({t:'shape', cx:54, tx:10, open:0, name:`Rectangle ${n}`, mode:1, mark:'i'}));
const LAYERS = [
  {t:'layer', mark:''},
  {t:'head', cx:23, tx:7, name:'Contents', add:1, mark:'i'},
  {t:'shape', cx:40, tx:7, open:1, name:'Group 2', mode:1, mark:'i'}, ...rects,
  {t:'head', cx:57, tx:7, name:'Transform: Group 2', mark:'i'},
  {t:'prop', name:'Position', value:'-1250.0,0.0', prev:1, mark:'k', keys:[0,121]},
  {t:'prop', name:'Opacity', value:'0', unit:'%', prev:1, mark:'o'},
  {t:'shape', cx:40, tx:7, open:1, name:'Group 1', mode:1, mark:'i'}, ...rects,
  {t:'head', cx:57, tx:7, name:'Transform: Group 1', mark:'i'},
  {t:'prop', name:'Position', value:'-1250.0,0.0', next:1, open:1, red:1, mark:'k', keys:[121,241]},
  {t:'expr', mark:'e'},
  {t:'prop', name:'Opacity', value:'100', unit:'%', prev:1, mark:'o'},
  {t:'head', cx:20, tx:10, open:0, name:'Transform', reset:1, mark:'i'},
];

define('layer-row', `
:host{display:block}
.row{display:flex;height:17px;border-bottom:1px solid var(--line);align-items:center}
.layer{background:#333}.expr{height:36px}
.av{width:68px;flex:none;display:flex;align-items:center;height:16px}
.av button{width:15px;height:14px}
.eye{margin-left:3px;background:#1c1c1c;color:#c0c0c0}
.tree{width:298px;flex:none;display:flex;align-items:center;padding-top:2px}
.c{width:8px;display:flex;justify-content:center;flex:none;color:#bbb}
.bx{width:13px;height:13px;background:#222;margin-right:2px}
.av .bx{margin:0 1px}
.w{width:126px}
.kn{display:flex;align-items:center}.kn button{width:16px}.dim{opacity:.35}
.bl{color:var(--accent)}.v{color:var(--blue);font-weight:500}.red{color:#d63a35}
.sw{display:flex;align-items:center;width:135px}.sw button{width:13px;margin-right:2px}
b{font-weight:700}
.ex{display:flex;align-items:start;align-self:start;padding:2px 0 0 18px}
`, el => {
  const r = LAYERS[el.getAttribute('i')];
  const eye = `<button class="eye" aria-label="Visibility">${ic('eye')}</button>`;
  if (r.t === 'layer') return `<div class="row layer"><span class="av">${eye}<span class="bx" style="margin-left:16px"></span><span class="bx"></span></span>
<span class="tree" style="padding:0"><span class="c" style="margin:0 4px 0 5px">${ic('chev')}</span><span style="width:12px;height:12px;background:#6b7de0;margin-right:9px"></span><b>1</b><span style="margin:0 8px 0 24px;color:#c4c4c4">${ic('star')}</span><b>Shape Layer 1</b></span>
<span class="sw"><button aria-label="Shy">${ic('shy')}</button><button aria-label="Collapse" style="opacity:.6">${ic('sun')}</button><button aria-label="Quality">${ic('slash')}</button><span class="bx" style="margin-left:30px"></span><span class="bx"></span><span class="bx"></span></span>
<ae-select slim label="Mode" style="width:68px;margin-right:6px">Normal</ae-select><span class="bx"></span></div>`;
  if (r.t === 'prop') return `<div class="row"><span class="av kn" style="padding-left:2px"><button class="${r.prev?'':'dim'}" aria-label="Previous keyframe">${ic('kprev')}</button><button class="bl" aria-label="Keyframe">${ic('kdia')}</button><button class="${r.next?'':'dim'}" aria-label="Next keyframe">${ic('knext')}</button></span>
<span class="tree"><span class="c" style="margin:0 6px 0 73px">${r.open ? ic('chev') : ''}</span><span class="bl">${ic('watch')}</span><span style="margin:0 9px 0 9px">${ic('graph')}</span>${r.name}</span><button class="v ${r.red?'red':''}">${r.value}</button>${r.unit||''}</div>`;
  if (r.t === 'expr') return `<div class="row expr"><span style="width:366px;padding-left:174px">Expression: Position</span><span class="ex"><span class="bl" style="margin:2px 7px 0 0">${ic('eq')}</span>${ic('graph')}<span style="margin:0 5px 0 7px">${ic('swirl')}</span>${ic('playc')}</span></div>`;
  return `<div class="row"><span class="av">${r.t==='shape' ? eye : ''}</span><span class="tree"><span class="c" style="margin:0 ${r.tx}px 0 ${r.cx}px">${ic(r.open===0 ? 'chevr' : 'chev')}</span>${r.name}</span>
${r.mode ? '<ae-select slim class="w" label="Blend mode">Normal</ae-select>' : ''}${r.add ? `<span style="padding-left:90px;display:flex;gap:3px;align-items:center">Add: ${ic('playc')}</span>` : ''}${r.reset ? '<button class="v">Reset</button>' : ''}</div>`;
});

const FR = 326.6, pos = f => `${(f / FR * 100).toFixed(3)}%`;
define('track-row', `
:host{display:block}
.row{position:relative;height:17px;border-bottom:1px solid var(--line);background:#343434}
.tall{height:36px}.layer{background:#565d96;border-top:1px solid #666a88;border-bottom:1px solid #22243a}
.key{position:absolute;top:50%;transform:translate(-50%,-50%);color:#b9b9b9}
.op{margin-left:-2px}
textarea{display:block;width:100%;height:34px;resize:none;font:12px/16px "DejaVu Sans Mono",monospace;padding:2px 6px;color:#a8a8a8}
`, el => {
  const r = LAYERS[el.getAttribute('i')];
  const k = (f, n, c='') => `<span class="key ${c}" style="left:${pos(f)}">${ic(n)}</span>`;
  if (r.t === 'layer') return '<div class="row layer"></div>';
  return `<div class="row ${r.mark==='e'?'tall':''}">${r.mark==='i' ? k(121,'ibeam') : r.mark==='k' ? r.keys.map(f => k(f,'kdia')).join('') : r.mark==='o' ? k(121,'opk','op') : '<textarea aria-label="Expression">loopOut()</textarea>'}</div>`;
});

define('time-ruler', `
:host{display:block}
.nav{display:flex;height:10px;background:#3b3a32;margin-right:6px;border-top:1px solid #4a4940;margin-left:-7px}
.nav .h{width:7px;background:var(--accent);border-radius:5px 0 0 5px}.nav .h+.z+.h{border-radius:0 5px 5px 0}
.z{width:27%;background:#6a6a6a;border:1px solid #000;border-top:0;display:flex}
.z::before{content:"";margin-left:37%;width:2px;background:#5c8bb5}
.ru{position:relative;height:19px;font-size:10px;line-height:12px;color:#8e8e8e;margin-left:-7px;overflow:hidden}
.in{position:absolute;inset:0 0 0 7px}
.t{position:absolute;top:0;bottom:0;transform:translateX(-50%);display:flex;flex-direction:column;align-items:center;justify-content:space-between}
.t::after{content:"";width:1px;height:5px;background:#8e8e8e}.M::after{height:8px;margin-top:-3px}
.wa{display:flex;height:16px;border:solid #000;border-width:1px 0;margin-left:-7px}
.wa i{width:6px;margin-right:1px;background:var(--accent);border-radius:4px 0 0 4px}.wa div{flex:1;background:#606060}
.gr{height:4px;background:#22b42d;border-bottom:1px solid #000}
`, () => {
  let t = '';
  for (let i = 0; i <= 22; i++) { const s = String(i >> 1).padStart(2,'0'); t += `<span class="t ${i%2?'':'M'}" style="left:${pos(i*15)}">${s}:${i%2?'15':'00'}f</span>`; }
  return `<div class="nav"><span class="h"></span><span class="z"></span><span class="h"></span></div><div class="ru"><div class="in">${t}</div></div><div class="wa"><i></i><div></div></div><div class="gr"></div>`;
});

define('timeline-panel', `
:host{display:flex;flex-direction:column;background:var(--bg);border:1px solid #2e6ca8;margin:0 1px 1px}
.tab{display:flex;align-items:center;height:27px;padding:0 0 2px 9px}
.x{width:15px;height:14px;justify-content:start}.sq{width:10px;height:10px;background:#a89878;margin-right:11px}
.tab b{font-weight:500;color:var(--bright);margin-right:9px}
.main{display:flex}
.left{width:680px;flex:none;border-right:1px solid #000}
.ctl{display:flex;align-items:center;height:35px;padding-bottom:2px}
.tc{width:100px;flex:none;padding-left:10px;color:var(--blue)}
.tc b{display:block;font-size:15px;line-height:16px;font-weight:900;padding-left:2px}.tc span{color:#2373b5;display:block;line-height:12px}
ae-search{width:378px;margin-right:15px}
.ib{display:flex;color:#b3b3b3}.ib button{height:20px;justify-content:start}
.hd{display:flex;align-items:center;height:20px;background:#303030;border:solid #000;border-width:1px 0}
.hd i{width:1px;height:12px;background:#111;flex:none}
.hd .av{width:67px;display:flex;align-items:center;gap:5px;padding-left:6px;color:#b3b3b3}
.sw{display:flex;align-items:center;width:136px;color:#b3b3b3;padding-left:4px}.sw>*{width:15px;flex:none}
.fx{font:italic 14px/12px "Liberation Serif",serif}
.left .fill,.right .fill{height:17px}
.right{flex:1;position:relative;min-width:0;padding-left:7px;padding-top:5px}
.right .fill{background:#343434}
.ph{position:absolute;top:21px;bottom:0;left:7px;right:0;pointer-events:none}
.ph div{position:absolute;left:37.050%;top:0;bottom:0;width:12px;margin-left:-6px;background:linear-gradient(var(--accent),var(--accent)) center/1px 100% no-repeat}
.gut{width:17px;flex:none;border-left:1px solid #000;background:#232323;color:#b8b8b8;display:flex;flex-direction:column;align-items:center;padding-top:34px;gap:5px;margin-top:4px}
footer{display:flex;align-items:center;height:17px;border-top:1px solid #000;background:#262626}
footer .bl{color:var(--accent);display:flex;gap:6px;padding-left:5px;width:42px}
footer .z{display:flex;align-items:center;gap:15px;width:102px;color:#b3b3b3;margin-left:auto}
input[type=range]{appearance:none;width:43px;height:12px}
input::-webkit-slider-runnable-track{height:2px;background:#4c4c4c}
input::-webkit-slider-thumb{appearance:none;width:10px;height:10px;border:2px solid #9d9d9d;border-radius:50%;background:#262626;margin-top:-4px}
.lf{display:flex;width:786px;align-items:center}
.sb{flex:1;background:#1c1c1c;height:16px;padding-left:1px}.sb div{width:27%;height:15px;border-radius:8px;background:#333}
`, () => {
  const rows = tag => LAYERS.map((_, i) => `<${tag} i="${i}"></${tag}>`).join('');
  const widths = [35,33,27,25,34,30];
  return `<div class="tab"><button class="x" aria-label="Close">×</button><span class="sq"></span><b>Comp 1</b>${ic('menu')}</div>
<div class="main"><div class="left">
<div class="ctl"><div class="tc"><b>0;00;04;01</b><span>00121 (29.97 fps)</span></div><ae-search blue icon="magd" label="Search layers" value="rectangle, pos, opac"></ae-search>
<div class="ib">${['flowmini','cubestar','shybtn','film','blur','graphed'].map((n, i) => `<button aria-label="${n}" style="width:${widths[i]}px">${ic(n)}</button>`).join('')}</div></div>
<div class="hd"><span class="av">${ic('eye')}${ic('spk')}${ic('dot')}${ic('lock')}</span><i></i><span style="width:31px;padding-left:13px;color:#b3b3b3">${ic('tag')}</span><i></i><span style="width:32px;padding-left:5px">#</span><i></i><span style="width:227px;padding-left:5px">Source Name</span><i></i>
<span class="sw">${ic('shy')}${ic('sun')}${ic('dash')}<span class="fx">fx</span>${ic('film2')}${ic('blur')}${ic('adj')}${ic('cube')}</span><i></i><span style="width:81px;padding-left:5px">Mode</span><span style="width:17px">T</span><span style="width:66px">TrkMat</span><i></i></div>
${rows('layer-row')}<div class="fill"></div></div>
<div class="right"><time-ruler></time-ruler>${rows('track-row')}<div class="fill"></div><div class="ph"><div>${ic('head')}</div></div></div>
<div class="gut">${ic('shield')}${ic('comps')}</div></div>
<footer><div class="lf"><span class="bl">${ic('f1')}${ic('f2')}</span><span style="color:#aaa">${ic('f3')}</span><div class="z">${ic('mt1')}<input type="range" aria-label="Timeline zoom" value="80">${ic('mt2')}</div></div><div class="sb"><div></div></div></footer>`;
});

define('ae-app', `
:host{display:flex;flex-direction:column;height:100vh}
main{flex:1;display:grid;grid-template-columns:320px 1fr 218px;column-gap:5px;padding:2px 0 4px 1px;min-height:0}
main>*{min-height:0;min-width:0}
`, `<mac-menubar></mac-menubar><ae-toolbar></ae-toolbar><main><project-panel></project-panel><comp-panel></comp-panel><preview-panel></preview-panel></main><timeline-panel></timeline-panel>`);
</script>
</body>
</html>
